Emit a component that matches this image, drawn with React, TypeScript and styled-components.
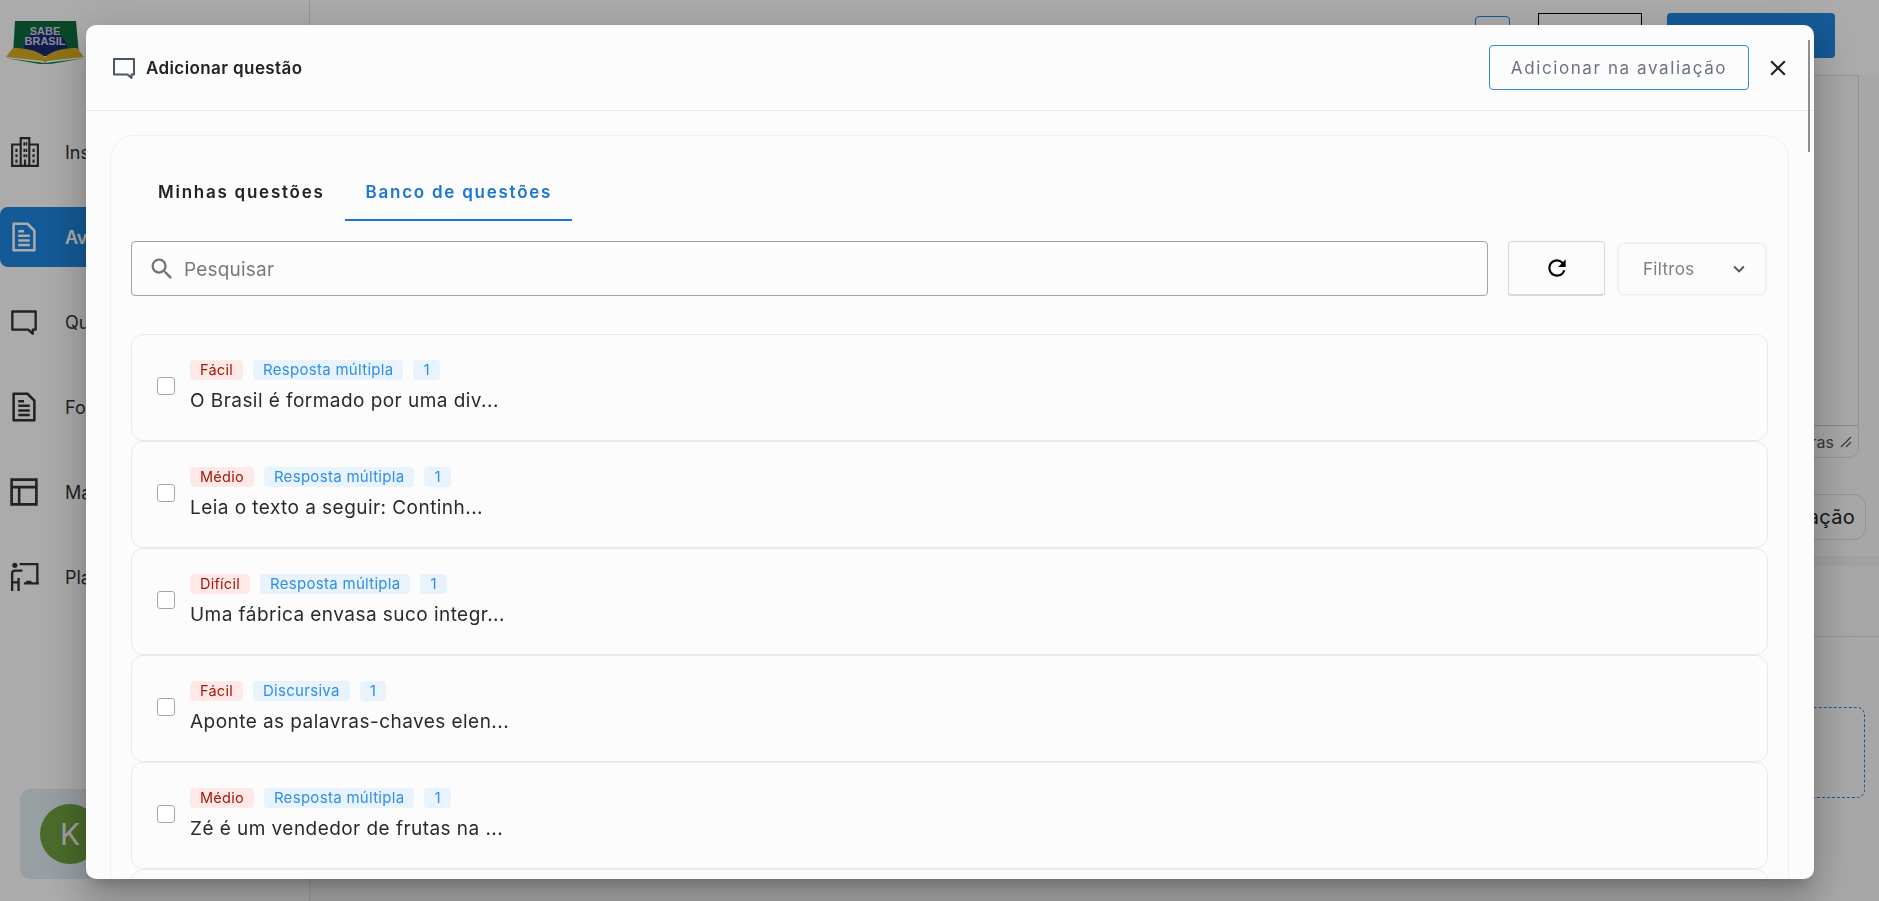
import React from "react";
import styled, { createGlobalStyle } from "styled-components";
import {
  MdClose,
  MdKeyboardArrowDown,
  MdRefresh,
  MdSearch,
} from "react-icons/md";

const GlobalStyle = createGlobalStyle`
  html, body {
    margin: 0;
    height: 100%;
    overflow: hidden;
    background: #fff;
    font-family: Inter, "Noto Sans", sans-serif;
    color: #222;
  }
  * { box-sizing: border-box; }
`;

function CommentIcon({ size = 24 }: { size?: number }) {
  return (
    <svg width={size} height={size} viewBox="0 0 24 24" fill="none">
      <path
        d="M2 3h20v15.5h-2.5V22l-4-3.5H2z"
        stroke="currentColor"
        strokeWidth="2"
        strokeLinejoin="round"
      />
    </svg>
  );
}

function DocIcon() {
  return (
    <svg width="28" height="30" viewBox="0 0 24 26" fill="none">
      <path
        d="M3 1.500h12l6 6v17H3z"
        stroke="currentColor"
        strokeWidth="2.2"
        strokeLinejoin="round"
      />
      <path
        d="M7 12h10M7 16h10M7 20h10M7 8h5"
        stroke="currentColor"
        strokeWidth="2.2"
      />
    </svg>
  );
}

function BuildingIcon() {
  return (
    <svg width="30" height="30" viewBox="0 0 28 28" fill="currentColor">
      <path
        fillRule="evenodd"
        d="M9 0h10v6h8v22H1V6h8zM11 2v24h2v-5h2v5h2V2zM3 8v18h6V8zm16 0v18h6V8z"
      />
      <path d="M12.500 5h1.600v3h-1.600zM14.500 5h1.600v3h-1.600zM12.500 11h1.600v3h-1.600zM14.500 11h1.600v3h-1.600zM12.500 16h1.600v3h-1.600zM14.500 16h1.600v3h-1.600zM5 11h2v3H5zM5 16h2v3H5zM5 21h2v3H5zM21 11h2v3h-2zM21 16h2v3h-2zM21 21h2v3h-2z" />
    </svg>
  );
}

function LayoutIcon() {
  return (
    <svg width="28" height="28" viewBox="0 0 26 26" fill="none">
      <path
        d="M1.500 1.500h23v23h-23zM1.500 8.500h23M8.500 8.500v16"
        stroke="currentColor"
        strokeWidth="2.400"
      />
    </svg>
  );
}

function TeacherIcon() {
  return (
    <svg width="30" height="30" viewBox="0 0 28 28" fill="none">
      <circle cx="4.500" cy="3" r="2.400" fill="currentColor" />
      <path
        d="M9 2h16.500v17.500M2 27V10.500q0-2.500 2.500-2.500h7M8 27V15M2 19h6M13 20h14"
        stroke="currentColor"
        strokeWidth="2.200"
      />
      <path d="M15 17.500h5V20h-5z" fill="currentColor" />
    </svg>
  );
}

function Logo() {
  return (
    <svg width="80" height="44" viewBox="0 0 80 44">
      <path d="M10 1h61l3 34H8z" fill="#0f6b3c" />
      <path d="M17 36a23.500 27 0 0 1 47 0z" fill="#1c2a6e" />
      <path
        d="M1 37l7-9c12 0 24 2 32 9 8-7 20-9 32-9l7 9-37 4-2 2-2-2z"
        fill="#d7ad24"
      />
      <path d="M0 38l40 5 40-5-40 7z" fill="#0f8a45" />
      <LogoText x="40" y="15">
        SABE
      </LogoText>
      <LogoText x="40" y="25">
        BRASIL
      </LogoText>
    </svg>
  );
}

const LogoText = styled.text`
  font-family: "Liberation Sans", sans-serif;
  font-size: 11px;
  font-weight: 700;
  fill: #c9d3e6;
  text-anchor: middle;
`;

const menu = [
  { label: "Instituições", icon: <BuildingIcon /> },
  { label: "Avaliações", icon: <DocIcon />, active: true },
  { label: "Questões", icon: <CommentIcon size={28} /> },
  { label: "Formulários", icon: <DocIcon /> },
  { label: "Materiais", icon: <LayoutIcon /> },
  { label: "Planos", icon: <TeacherIcon /> },
];

const questions = [
  { level: "Fácil", kind: "Resposta múltipla", text: "O Brasil é formado por uma div..." },
  { level: "Médio", kind: "Resposta múltipla", text: "Leia o texto a seguir: Continh..." },
  { level: "Difícil", kind: "Resposta múltipla", text: "Uma fábrica envasa suco integr..." },
  { level: "Fácil", kind: "Discursiva", text: "Aponte as palavras-chaves elen..." },
  { level: "Médio", kind: "Resposta múltipla", text: "Zé é um vendedor de frutas na ..." },
];

export default function App() {
  return (
    <>
      <GlobalStyle />
      <Page>
        <Sidebar>
          <LogoBox>
            <Logo />
          </LogoBox>
          <Menu>
            {menu.map((item) => (
              <MenuItem key={item.label} $active={item.active}>
                <MenuIcon>{item.icon}</MenuIcon>
                {item.label}
              </MenuItem>
            ))}
          </Menu>
          <UserBox>
            <Avatar>K</Avatar>
          </UserBox>
        </Sidebar>
        <Main>
          <TopBar>
            <SquareButton />
            <OutlineButton />
            <PrimaryButton />
          </TopBar>
          <Content>
            <TextBox>
              <Counter>
                palavras
                <Grip viewBox="0 0 12 12">
                  <path d="M1 11L11 1M6 11l5-5" stroke="#555" strokeWidth="1.2" />
                </Grip>
              </Counter>
            </TextBox>
            <GhostButton>Adicionar questão na avaliação</GhostButton>
            <Band />
            <Divider />
            <DropZone />
          </Content>
        </Main>
      </Page>
      <Backdrop />
      <Modal>
        <ScrollThumb />
        <ModalHeader>
          <ModalTitle>
            <TitleIcon>
              <CommentIcon size={24} />
            </TitleIcon>
            Adicionar questão
          </ModalTitle>
          <HeaderActions>
            <AddButton>Adicionar na avaliação</AddButton>
            <CloseButton>
              <MdClose size={26} />
            </CloseButton>
          </HeaderActions>
        </ModalHeader>
        <ModalBody>
          <Card>
            <Tabs>
              <Tab>Minhas questões</Tab>
              <Tab $active>Banco de questões</Tab>
            </Tabs>
            <Toolbar>
              <SearchBox>
                <MdSearch size={28} color="#6f7378" />
                <SearchInput placeholder="Pesquisar" />
              </SearchBox>
              <RefreshButton>
                <MdRefresh size={26} color="#000" />
              </RefreshButton>
              <FilterButton>
                Filtros
                <MdKeyboardArrowDown size={22} color="#555" />
              </FilterButton>
            </Toolbar>
            <List>
              {questions.map((q) => (
                <Item key={q.text}>
                  <Check />
                  <ItemBody>
                    <Chips>
                      <Chip $tone="red">{q.level}</Chip>
                      <Chip $tone="blue">{q.kind}</Chip>
                      <Chip $tone="blue">1</Chip>
                    </Chips>
                    <ItemText>{q.text}</ItemText>
                  </ItemBody>
                </Item>
              ))}
              <Item />
            </List>
          </Card>
        </ModalBody>
      </Modal>
    </>
  );
}

const Page = styled.div`
  display: flex;
  height: 901px;
  overflow: hidden;
`;

const Sidebar = styled.aside`
  width: 310px;
  flex: none;
  border-right: 1px solid #e2e2e2;
  display: flex;
  flex-direction: column;
  padding-top: 20px;
  padding-bottom: 22px;
`;

const LogoBox = styled.div`
  height: 44px;
  padding-left: 5px;
`;

const Menu = styled.nav`
  margin-top: 58px;
  display: flex;
  flex-direction: column;
  gap: 25px;
  flex: 1;
`;

const MenuItem = styled.div<{ $active?: boolean }>`
  height: 60px;
  width: 290px;
  display: flex;
  align-items: center;
  font-size: 18px;
  font-weight: ${(p) => (p.$active ? 600 : 400)};
  color: ${(p) => (p.$active ? "#fff" : "#333")};
  background: ${(p) => (p.$active ? "#1f86e0" : "transparent")};
  border-radius: 8px;
`;

const MenuIcon = styled.span`
  width: 65px;
  padding-left: 10px;
  display: flex;
`;

const UserBox = styled.div`
  margin-left: 20px;
  width: 270px;
  height: 90px;
  border-radius: 10px;
  background: #e2edf3;
  display: flex;
  align-items: center;
  padding-left: 20px;
`;

const Avatar = styled.div`
  width: 60px;
  height: 60px;
  border-radius: 50%;
  background: #6fa13f;
  color: #eee;
  font-size: 30px;
  display: flex;
  align-items: center;
  justify-content: center;
`;

const Main = styled.main`
  flex: 1;
  min-width: 0;
`;

const TopBar = styled.header`
  height: 75px;
  background: #fff;
  display: flex;
  align-items: flex-start;
  justify-content: flex-end;
  padding: 13px 44px 0 0;
`;

const SquareButton = styled.div`
  width: 35px;
  height: 36px;
  margin-top: 3px;
  border: 1px solid #1f86e0;
  border-radius: 4px;
  margin-right: 28px;
`;

const OutlineButton = styled.div`
  width: 104px;
  height: 36px;
  border: 1px solid #000;
  margin-right: 25px;
`;

const PrimaryButton = styled.div`
  width: 168px;
  height: 45px;
  background: #1f86e0;
  border-radius: 4px;
`;

const Content = styled.div`
  height: 826px;
  background: #fafafa;
  padding-right: 20px;
  display: flex;
  flex-direction: column;
  align-items: flex-end;
`;

const TextBox = styled.div`
  width: 800px;
  height: 383px;
  border: 1px solid #ddd;
  border-radius: 0 0 10px 10px;
  display: flex;
  flex-direction: column;
  justify-content: flex-end;
`;

const Counter = styled.div`
  height: 32px;
  border-top: 1px solid #d0d0d0;
  display: flex;
  align-items: center;
  justify-content: flex-end;
  gap: 6px;
  padding-right: 6px;
  font-size: 16px;
  color: #555;
`;

const Grip = styled.svg`
  width: 12px;
  height: 12px;
`;

const GhostButton = styled.div`
  margin: 36px -7px 0 0;
  height: 46px;
  padding: 0 10px;
  border: 1px solid #ddd;
  border-radius: 12px;
  display: flex;
  align-items: center;
  font-size: 20px;
  letter-spacing: 0.3px;
  color: #222;
`;

const Band = styled.div`
  margin: 16px -20px 0 0;
  align-self: stretch;
  height: 10px;
  background: #f0f0f0;
`;

const Divider = styled.div`
  margin: 70px -20px 0 0;
  align-self: stretch;
  height: 1px;
  background: #ddd;
`;

const DropZone = styled.div`
  margin: 70px -6px 0 0;
  width: 400px;
  height: 91px;
  border: 1.5px dashed #1f86e0;
  border-radius: 8px;
`;

const Backdrop = styled.div`
  position: fixed;
  inset: 0;
  background: rgba(0, 0, 0, 0.33);
`;

const Modal = styled.section`
  position: fixed;
  top: 25px;
  left: 86px;
  width: 1728px;
  height: 854px;
  background: #fcfcfd;
  border-radius: 10px;
  overflow: hidden;
  box-shadow: 0 11px 15px -7px rgba(0, 0, 0, 0.2),
    0 24px 38px 3px rgba(0, 0, 0, 0.14), 0 9px 46px 8px rgba(0, 0, 0, 0.12);
`;

const ScrollThumb = styled.div`
  position: absolute;
  top: 15px;
  right: 4px;
  width: 2px;
  height: 112px;
  background: #8d8d92;
`;

const ModalHeader = styled.div`
  height: 86px;
  border-bottom: 1px solid #e9e9ee;
  display: flex;
  align-items: center;
  justify-content: space-between;
  padding: 0 23px 0 26px;
`;

const ModalTitle = styled.h2`
  margin: 0;
  display: flex;
  align-items: center;
  gap: 10px;
  font-size: 17px;
  letter-spacing: 0.4px;
  font-weight: 600;
  color: #222;
`;

const TitleIcon = styled.span`
  display: flex;
  color: #4a5564;
`;

const HeaderActions = styled.div`
  display: flex;
  align-items: center;
  gap: 16px;
`;

const AddButton = styled.div`
  width: 260px;
  height: 45px;
  border: 1px solid #2d8ae0;
  border-radius: 4px;
  display: flex;
  align-items: center;
  justify-content: center;
  font-size: 17px;
  letter-spacing: 1.6px;
  color: #6b7280;
`;

const CloseButton = styled.div`
  display: flex;
  color: #222;
`;

const ModalBody = styled.div`
  padding: 24px 25px 0 24px;
`;

const Card = styled.div`
  height: 900px;
  border: 1px solid #f0f0f2;
  border-radius: 24px;
  padding: 25px 20px 0 20px;
`;

const Tabs = styled.div`
  display: flex;
  height: 60px;
  margin-left: 6px;
  margin-bottom: 20px;
`;

const Tab = styled.div<{ $active?: boolean }>`
  padding: 3px 20px 0 21px;
  display: flex;
  align-items: center;
  font-size: 17px;
  font-weight: 600;
  letter-spacing: 1.75px;
  color: ${(p) => (p.$active ? "#1976d2" : "#222")};
  border-bottom: 2px solid ${(p) => (p.$active ? "#1976d2" : "transparent")};
`;

const Toolbar = styled.div`
  display: flex;
  height: 55px;
  margin-right: 2px;
`;

const SearchBox = styled.div`
  flex: 1;
  border: 1px solid #a3a3a3;
  border-radius: 4px;
  display: flex;
  align-items: center;
  gap: 6px;
  padding-left: 16px;
`;

const SearchInput = styled.input`
  flex: 1;
  border: none;
  outline: none;
  background: transparent;
  padding-top: 3px;
  font-family: inherit;
  font-size: 19px;
  letter-spacing: 0.2px;
  color: #222;
  &::placeholder {
    color: #7a7a7a;
    opacity: 1;
  }
`;

const RefreshButton = styled.div`
  width: 97px;
  margin-left: 20px;
  border: 1px solid #d5d7dc;
  border-bottom-width: 2px;
  border-radius: 4px;
  display: flex;
  align-items: center;
  justify-content: center;
`;

const FilterButton = styled.div`
  width: 148px;
  margin: 2px 0 1px 13px;
  border: 1px solid #eeeef0;
  border-radius: 6px;
  box-shadow: 0 0 3px rgba(0, 0, 0, 0.08);
  display: flex;
  align-items: center;
  justify-content: space-between;
  padding: 0 15px 0 24px;
  font-size: 17px;
  letter-spacing: 0.3px;
  color: #7f7f7f;
`;

const List = styled.div`
  margin-top: 38px;
`;

const Item = styled.article`
  height: 107px;
  border: 1px solid #e9e9ec;
  border-radius: 12px;
  display: flex;
  align-items: center;
  padding-left: 25px;
  gap: 15px;
`;

const Check = styled.span`
  width: 18px;
  height: 18px;
  flex: none;
  margin-bottom: 4px;
  border: 1.5px solid #a6a6b0;
  border-radius: 3px;
  background: #fff;
`;

const ItemBody = styled.div`
  display: flex;
  flex-direction: column;
  gap: 8px;
  margin-bottom: 2px;
`;

const Chips = styled.div`
  display: flex;
  gap: 10px;
`;

const Chip = styled.span<{ $tone: "red" | "blue" }>`
  height: 20px;
  padding: 0 10px;
  border-radius: 4px;
  display: flex;
  align-items: center;
  font-size: ${(p) => (p.$tone === "red" ? "14.5px" : "15px")};
  letter-spacing: ${(p) => (p.$tone === "red" ? "0.25px" : "0.3px")};
  color: ${(p) => (p.$tone === "red" ? "#a3180c" : "#2f8fe6")};
  background: ${(p) => (p.$tone === "red" ? "#ffe9e7" : "#e8f3fd")};
`;

const ItemText = styled.p`
  margin: 0;
  font-size: 19px;
  letter-spacing: 0.45px;
  line-height: 26px;
  color: #2b2b2b;
`;
